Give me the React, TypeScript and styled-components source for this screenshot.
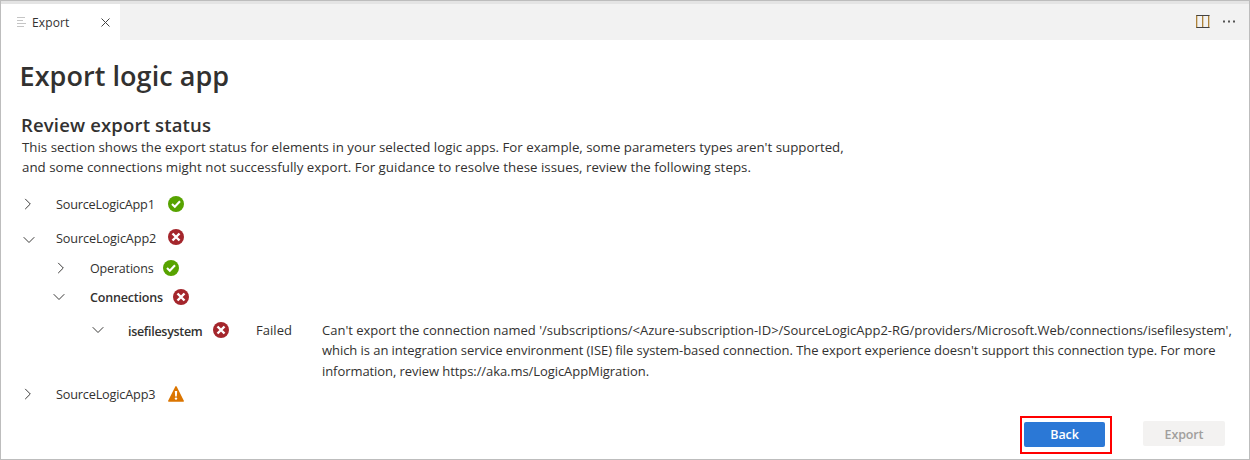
import React from 'react';
import styled, { createGlobalStyle } from 'styled-components';

const GlobalStyle = createGlobalStyle`
  * { box-sizing: border-box; }
  body { margin: 0; background: #fff; }
`;

const Window = styled.div`
  display: flex;
  flex-direction: column;
  width: 1250px;
  height: 460px;
  border: 1px solid #bdbdbd;
  background: #fff;
  color: #323130;
  font-family: 'Open Sans', 'Noto Sans', sans-serif;
  font-size: 13px;
  white-space: nowrap;
`;

const TopStrip = styled.div`
  flex: none;
  height: 3px;
  background: #e4e4e4;
`;

const TabBar = styled.header`
  flex: none;
  display: flex;
  justify-content: space-between;
  height: 36px;
  background: #f2f2f2;
`;

const Tab = styled.div`
  display: flex;
  align-items: center;
  width: 119px;
  padding-left: 16px;
  background: #fff;
`;

const TabLabel = styled.span`
  flex: 1;
  margin-left: 6px;
  padding-top: 1px;
  font-size: 12px;
  line-height: 17px;
  letter-spacing: 0.135px;
`;

const TabClose = styled.span`
  display: flex;
  margin-right: 10px;
`;

const EditorActions = styled.div`
  display: flex;
  align-items: center;
  gap: 12px;
  padding: 0 13px 1px 0;
`;

const Page = styled.main`
  flex: 1;
  display: flex;
  flex-direction: column;
`;

const Title = styled.h1`
  margin: 17px 0 0 18.5px;
  font-size: 27px;
  font-weight: 600;
  line-height: 38px;
  letter-spacing: 0.06px;
`;

const SectionTitle = styled.h2`
  margin: 17px 0 0 20px;
  font-size: 18.5px;
  font-weight: 600;
  line-height: 25px;
  letter-spacing: 0.16px;
`;

const Description = styled.div`
  margin: 0 0 10px 21px;
  font-size: 13.3px;
`;

const TextLine = styled.div<{ $tracking?: number; $height?: number }>`
  height: ${p => p.$height ?? 20}px;
  line-height: 20px;
  letter-spacing: ${p => p.$tracking ?? 0}px;
`;

const Tree = styled.div`
  display: flex;
  flex-direction: column;
`;

const TreeRow = styled.div<{ $height: number; $indent: number }>`
  display: flex;
  align-items: center;
  height: ${p => p.$height}px;
  padding-left: ${p => p.$indent}px;
`;

const DetailRow = styled.div`
  display: flex;
  align-items: flex-start;
  height: 68px;
`;

const Toggle = styled.span<{ $width: number; $drop?: number }>`
  flex: none;
  display: flex;
  width: ${p => p.$width}px;
  padding-top: ${p => p.$drop ?? 0}px;
`;

const Name = styled.span<{ $width: number; $tracking: number; $drop?: number }>`
  flex: none;
  width: ${p => p.$width}px;
  padding-top: ${p => p.$drop ?? 0}px;
  font-size: 12.7px;
  line-height: 20px;
  letter-spacing: ${p => p.$tracking}px;
`;

const ChildName = styled(Name)<{ $bold?: boolean }>`
  font-size: 12.5px;
  font-weight: ${p => (p.$bold ? 600 : 400)};
`;

const Result = styled.div`
  display: flex;
  padding-top: 8px;
`;

const ResultState = styled.span`
  width: 66px;
  margin-left: 27px;
  line-height: 20px;
  letter-spacing: 0.04px;
`;

const ResultMessage = styled.div`
  display: flex;
  flex-direction: column;
`;

const Footer = styled.footer`
  display: flex;
  align-items: flex-start;
  justify-content: flex-end;
  gap: 31px;
  margin-top: 9px;
  padding-right: 24px;
`;

const Highlight = styled.div`
  display: flex;
  width: 92px;
  height: 38px;
  padding: 4px 5px 5px 2px;
  border: 2px solid #ff0000;
`;

const ExportSlot = styled.div`
  display: flex;
  padding-top: 5px;
`;

const Button = styled.button<{ $primary?: boolean }>`
  width: ${p => (p.$primary ? 81 : 82)}px;
  height: 25px;
  padding: ${p => (p.$primary ? 1 : 2)}px 0 0;
  border: 0;
  border-radius: 2px;
  background: ${p => (p.$primary ? '#2b78d6' : '#f3f2f1')};
  color: ${p => (p.$primary ? '#fff' : '#a19f9d')};
  font: 600 12.5px/24px 'Open Sans', sans-serif;
  letter-spacing: ${p => (p.$primary ? -0.09 : -0.12)}px;
`;

const Chevron = ({ open }: { open?: boolean }) =>
  open ? (
    <svg width="12" height="8" viewBox="0 0 12 8" fill="none" stroke="#3b3a39">
      <path d="M.7 1.2 6 6.5l5.3-5.3" />
    </svg>
  ) : (
    <svg width="8" height="12" viewBox="0 0 8 12" fill="none" stroke="#3b3a39">
      <path d="M1.2.9 6.3 6l-5.1 5.1" />
    </svg>
  );

const StatusIcon = ({ kind }: { kind: 'ok' | 'error' | 'warning' }) => (
  <svg width="16" height="16" viewBox="0 0 16 16" fill="none">
    {kind === 'ok' && (
      <>
        <circle cx="8" cy="8" r="8" fill="#57a300" />
        <path d="m4 8.1 2.8 2.7 5.2-5.6" stroke="#fff" strokeWidth="2.1" />
      </>
    )}
    {kind === 'error' && (
      <>
        <circle cx="8" cy="8" r="8" fill="#a4262c" />
        <path d="m4.5 4.5 7 7M11.5 4.5l-7 7" stroke="#fff" strokeWidth="2.4" />
      </>
    )}
    {kind === 'warning' && (
      <>
        <path d="M8 .8 15.2 15H.8Z" fill="#db7500" stroke="#db7500" strokeWidth="1.5" strokeLinejoin="round" />
        <path d="M6.8 5h2.4l-.4 5.4H7.2Z" fill="#fff" />
        <circle cx="8" cy="12.6" r="1.2" fill="#fff" />
      </>
    )}
  </svg>
);

export default function App() {
  return (
    <Window>
      <GlobalStyle />
      <TopStrip />
      <TabBar>
        <Tab>
          <svg width="9" height="10" viewBox="0 0 9 10" fill="none" stroke="#c5c5c5">
            <path d="M0 .5h8M0 3.5h6M0 6.5h9M0 9.5h7" />
          </svg>
          <TabLabel>Export</TabLabel>
          <TabClose>
            <svg width="9" height="9" viewBox="0 0 9 9" stroke="#424242">
              <path d="m.5.5 8 8M8.5.5l-8 8" />
            </svg>
          </TabClose>
        </Tab>
        <EditorActions>
          <svg width="14" height="13" viewBox="0 0 14 13" fill="none">
            <path d="M.7 0v13M6.7 0v13M12.7 0v13" stroke="#a87826" strokeWidth="1.2" />
            <path d="M.5.5h13M.5 12.5h13" stroke="#424242" />
          </svg>
          <svg width="14" height="3" viewBox="0 0 14 3" fill="#555">
            <path d="M1 .5h2v2H1zM6 .5h2v2H6zM11 .5h2v2h-2z" />
          </svg>
        </EditorActions>
      </TabBar>
      <Page>
        <Title>Export logic app</Title>
        <SectionTitle>Review export status</SectionTitle>
        <Description>
          <TextLine>
            This section shows the export status for elements in your selected logic apps. For example, some
            parameters types aren't supported,
          </TextLine>
          <TextLine $tracking={0.027}>
            and some connections might not successfully export. For guidance to resolve these issues, review the
            following steps.
          </TextLine>
        </Description>
        <Tree>
          <TreeRow $height={33} $indent={23}>
            <Toggle $width={32}><Chevron /></Toggle>
            <Name $width={112} $tracking={-0.22}>SourceLogicApp1</Name>
            <StatusIcon kind="ok" />
          </TreeRow>
          <TreeRow $height={34} $indent={22}>
            <Toggle $width={33} $drop={5}><Chevron open /></Toggle>
            <Name $width={112} $drop={2} $tracking={-0.12}>SourceLogicApp2</Name>
            <StatusIcon kind="error" />
          </TreeRow>
          <TreeRow $height={28} $indent={56}>
            <Toggle $width={33}><Chevron /></Toggle>
            <ChildName $width={73} $drop={2} $tracking={-0.17}>Operations</ChildName>
            <StatusIcon kind="ok" />
          </TreeRow>
          <TreeRow $height={30} $indent={52}>
            <Toggle $width={37}><Chevron open /></Toggle>
            <ChildName $width={83} $bold $drop={2} $tracking={-0.175}>Connections</ChildName>
            <StatusIcon kind="error" />
          </TreeRow>
          <DetailRow>
            <TreeRow $height={35} $indent={91}>
              <Toggle $width={36}><Chevron open /></Toggle>
              <ChildName $width={85} $bold $drop={4} $tracking={-0.3}>isefilesystem</ChildName>
              <StatusIcon kind="error" />
            </TreeRow>
            <Result>
              <ResultState>Failed</ResultState>
              <ResultMessage>
                <TextLine>
                  {"Can't export the connection named '/subscriptions/<Azure-subscription-ID>/SourceLogicApp2-RG/providers/Microsoft.Web/connections/isefilesystem',"}
                </TextLine>
                <TextLine $height={21} $tracking={-0.059}>
                  which is an integration service environment (ISE) file system-based connection. The export
                  experience doesn't support this connection type. For more
                </TextLine>
                <TextLine $tracking={-0.068}>information, review https://aka.ms/LogicAppMigration.</TextLine>
              </ResultMessage>
            </Result>
          </DetailRow>
          <TreeRow $height={27} $indent={23}>
            <Toggle $width={32}><Chevron /></Toggle>
            <Name $width={112} $tracking={-0.18}>SourceLogicApp3</Name>
            <StatusIcon kind="warning" />
          </TreeRow>
        </Tree>
        <Footer>
          <Highlight>
            <Button $primary>Back</Button>
          </Highlight>
          <ExportSlot>
            <Button disabled>Export</Button>
          </ExportSlot>
        </Footer>
      </Page>
    </Window>
  );
}
